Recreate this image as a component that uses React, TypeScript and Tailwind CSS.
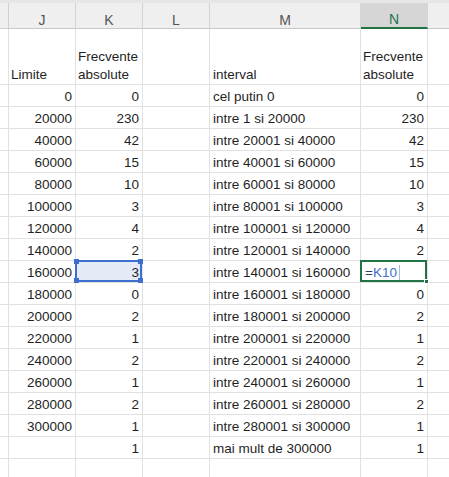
const font = { fontFamily: '"Liberation Sans", Arial, sans-serif' };

type Row = { lim: string; fa: string; interval: string; n: string };

const rows: Row[] = [
  { lim: "0", fa: "0", interval: "cel putin 0", n: "0" },
  { lim: "20000", fa: "230", interval: "intre 1 si 20000", n: "230" },
  { lim: "40000", fa: "42", interval: "intre 20001 si 40000", n: "42" },
  { lim: "60000", fa: "15", interval: "intre 40001 si 60000", n: "15" },
  { lim: "80000", fa: "10", interval: "intre 60001 si 80000", n: "10" },
  { lim: "100000", fa: "3", interval: "intre 80001 si 100000", n: "3" },
  { lim: "120000", fa: "4", interval: "intre 100001 si 120000", n: "4" },
  { lim: "140000", fa: "2", interval: "intre 120001 si 140000", n: "2" },
  { lim: "160000", fa: "3", interval: "intre 140001 si 160000", n: "=K10" },
  { lim: "180000", fa: "0", interval: "intre 160001 si 180000", n: "0" },
  { lim: "200000", fa: "2", interval: "intre 180001 si 200000", n: "2" },
  { lim: "220000", fa: "1", interval: "intre 200001 si 220000", n: "1" },
  { lim: "240000", fa: "2", interval: "intre 220001 si 240000", n: "2" },
  { lim: "260000", fa: "1", interval: "intre 240001 si 260000", n: "1" },
  { lim: "280000", fa: "2", interval: "intre 260001 si 280000", n: "2" },
  { lim: "300000", fa: "1", interval: "intre 280001 si 300000", n: "1" },
  { lim: "", fa: "1", interval: "mai mult de 300000", n: "1" },
];

const cols = "grid grid-cols-[9px_67px_67px_67px_151px_67px_1fr]";
const cell = "border-r border-b border-[#e1e1e1] flex items-end leading-[18px] text-[13.5px] text-[#1f1f1f] overflow-visible whitespace-nowrap";

function Handle({ pos }: { pos: string }) {
  return <div className={`absolute w-[5px] h-[5px] bg-[#3f6fce] z-10 ${pos}`} />;
}

export default function App() {
  const heads = ["J", "K", "L", "M", "N"];
  return (
    <div className="w-[449px] h-[477px] overflow-hidden bg-white" style={font}>
      <div className="h-[3px] bg-[#e6e6e6]" />
      <div className={`${cols} h-[26px] bg-[#efefef]`}>
        <div className="border-r border-b border-[#d0d0d0]" />
        {heads.map((h) => (
          <div
            key={h}
            className={`flex items-end justify-center leading-[16px] text-[14px] border-r border-[#d4d4d4] ${
              h === "N" ? "bg-[#d6d6d6] text-[#217346] border-b-2 border-b-[#217346]" : "text-[#555] border-b border-b-[#c8c8c8]"
            }`}
          >
            {h}
          </div>
        ))}
        <div className="border-b border-[#c8c8c8]" />
      </div>

      <div className={`${cols} h-[56px]`}>
        <div className={cell} />
        <div className={`${cell} pl-[2px]`}>Limite</div>
        <div className={`${cell} pl-[2px] flex-col !items-start justify-end`}>
          <span>Frecvente</span>
          <span>absolute</span>
        </div>
        <div className={cell} />
        <div className={`${cell} pl-[3px]`}>interval</div>
        <div className={`${cell} pl-[2px] flex-col !items-start justify-end`}>
          <span>Frecvente</span>
          <span>absolute</span>
        </div>
        <div className="border-b border-[#e1e1e1]" />
      </div>

      {rows.map((r, i) => {
        const selK = r.lim === "160000";
        return (
          <div key={i} className={`${cols} h-[22px]`}>
            <div className={cell} />
            <div className={`${cell} justify-end pr-[3px]`}>{r.lim}</div>
            <div className={`${cell} justify-end pr-[3px] relative ${selK ? "bg-[#e4eaf6]" : ""}`}>
              {r.fa}
              {selK && (
                <div className="absolute -left-[1px] -top-[1px] right-0 bottom-0 border-2 border-[#3f6fce]">
                  <Handle pos="-left-[3px] -top-[3px]" />
                  <Handle pos="-right-[3px] -top-[3px]" />
                  <Handle pos="-left-[3px] -bottom-[3px]" />
                  <Handle pos="-right-[3px] -bottom-[3px]" />
                </div>
              )}
            </div>
            <div className={cell} />
            <div className={`${cell} pl-[3px]`}>{r.interval}</div>
            {r.n === "=K10" ? (
              <div className={`${cell} relative pl-[4px]`}>
                <span className="text-[#2b3f6b]">=</span>
                <span className="text-[#3f6fce]">K10</span>
                <span className="ml-[2px] mb-[2px] w-[1px] h-[15px] bg-[#a9b9dc]" />
                <div className="absolute -left-[1px] -top-[1px] right-0 bottom-0 border-2 border-[#217346]">
                  <div className="absolute -right-[4px] -bottom-[4px] w-[5px] h-[5px] bg-[#217346] border border-white" />
                </div>
              </div>
            ) : (
              <div className={`${cell} justify-end pr-[3px]`}>{r.n}</div>
            )}
            <div className="border-b border-[#e1e1e1]" />
          </div>
        );
      })}

      <div className={`${cols} h-[22px]`}>
        <div className={cell} />
        <div className={cell} />
        <div className={cell} />
        <div className={cell} />
        <div className={cell} />
        <div className={cell} />
        <div className="border-b border-[#e1e1e1]" />
      </div>
    </div>
  );
}
